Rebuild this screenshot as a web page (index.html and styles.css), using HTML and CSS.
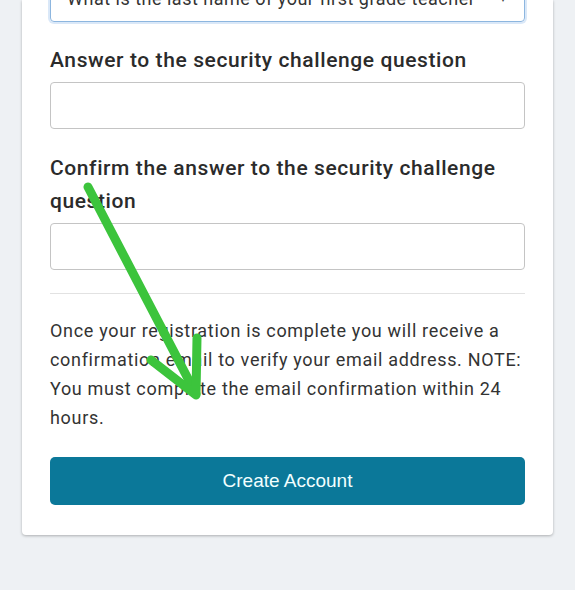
FILE: index.html
```html
<!DOCTYPE html>
<html lang="en">
<head>
<meta charset="utf-8">
<title>Create Account</title>
<link rel="stylesheet" href="styles.css">
</head>
<body>
<div class="page">
  <form class="card">
    <div class="select">
      <span class="select-text">What is the last name of your first grade teacher</span>
      <span class="select-caret">&#9662;</span>
    </div>
    <div class="field first">
      <label class="label">Answer to the security challenge question</label>
      <div class="input"></div>
    </div>
    <div class="field">
      <label class="label">Confirm the answer to the security challenge question</label>
      <div class="input"></div>
    </div>
    <hr class="divider">
    <p class="note">Once your registration is complete you will receive a confirmation email to verify your email address. NOTE: You must complete the email confirmation within 24 hours.</p>
    <button type="button" class="btn">Create Account</button>
  </form>
</div>
<svg class="arrow" width="575" height="590" viewBox="0 0 575 590">
  <g fill="none" stroke="#3cc43c" stroke-width="9" stroke-linecap="round" stroke-linejoin="round">
    <line x1="88" y1="187" x2="196" y2="394"/>
    <polyline points="151,360 196,395 197,338"/>
  </g>
</svg>
</body>
</html>
```
FILE: styles.css
```css
html, body {
  margin: 0;
  padding: 0;
  background: #eef1f4;
  font-family: Roboto, "Liberation Sans", Arial, sans-serif;
  overflow: hidden;
}

.page {
  padding: 0 22px;
  height: 590px;
}

.card {
  background: #fff;
  padding: 0 28px 30px;
  border-radius: 0 0 4px 4px;
  box-shadow: 0 1px 3px rgba(0, 0, 0, 0.28);
  display: flex;
  flex-direction: column;
}

.select {
  margin-top: -26px;
  height: 48px;
  box-sizing: border-box;
  border: 1px solid #8db6df;
  border-radius: 4px;
  box-shadow: 0 0 0 2px rgba(150, 190, 235, 0.35);
  display: flex;
  align-items: center;
  justify-content: space-between;
  padding: 0 18px 0 16px;
  font-size: 18px;
  letter-spacing: 0.5px;
  color: #333;
}

.select-caret {
  font-size: 12px;
  color: #444;
}

.field {
  display: flex;
  flex-direction: column;
  margin-top: 23px;
}

.field.first {
  margin-top: 22px;
}

.label {
  font-size: 21px;
  font-weight: 500;
  letter-spacing: 0.6px;
  line-height: 33px;
  color: #2b2b2b;
  margin-bottom: 5px;
}

.input {
  height: 47px;
  box-sizing: border-box;
  border: 1px solid #c4c4c4;
  border-radius: 4px;
  background: #fff;
}

.divider {
  border: 0;
  border-top: 1px solid #e2e2e2;
  margin: 23px 0 0;
}

.note {
  margin: 22px 0 0;
  font-size: 18px;
  letter-spacing: 0.68px;
  line-height: 29px;
  color: #333;
}

.btn {
  margin-top: 25px;
  height: 48px;
  border: 0;
  border-radius: 5px;
  background: #0b7899;
  color: #f2ffff;
  font-family: "Liberation Sans", Arial, sans-serif;
  font-size: 19px;
  cursor: pointer;
}

.arrow {
  position: absolute;
  left: 0;
  top: 0;
  pointer-events: none;
}
```
